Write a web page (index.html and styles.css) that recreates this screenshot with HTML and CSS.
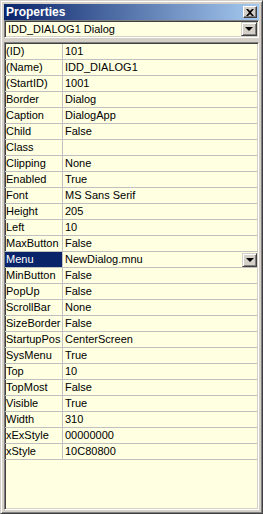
FILE: index.html
```html
<!DOCTYPE html>
<html lang="en">
<head>
  <meta charset="UTF-8">
  <title>Properties</title>
  <link rel="stylesheet" href="styles.css">
</head>
<body>
  <div class="window">
    <div class="titlebar">
      <span class="title">Properties</span>
      <span class="close-btn">
        <svg width="8" height="7" viewBox="0 0 8 7"><path d="M0 0h2l2 2 2-2h2L5 3.5 8 7H6L4 5 2 7H0l3-3.5z" fill="#000"/></svg>
      </span>
    </div>
    <div class="combo">
      <span class="combo-text">IDD_DIALOG1 Dialog</span>
      <span class="drop-btn"><span class="arrow"></span></span>
    </div>
    <div class="grid" id="grid">
      <!-- rows are built below -->
    </div>
  </div>

  <script>
    const props = [
      ["(ID)", "101"],
      ["(Name)", "IDD_DIALOG1"],
      ["(StartID)", "1001"],
      ["Border", "Dialog"],
      ["Caption", "DialogApp"],
      ["Child", "False"],
      ["Class", ""],
      ["Clipping", "None"],
      ["Enabled", "True"],
      ["Font", "MS Sans Serif"],
      ["Height", "205"],
      ["Left", "10"],
      ["MaxButton", "False"],
      ["Menu", "NewDialog.mnu"],
      ["MinButton", "False"],
      ["PopUp", "False"],
      ["ScrollBar", "None"],
      ["SizeBorder", "False"],
      ["StartupPos", "CenterScreen"],
      ["SysMenu", "True"],
      ["Top", "10"],
      ["TopMost", "False"],
      ["Visible", "True"],
      ["Width", "310"],
      ["xExStyle", "00000000"],
      ["xStyle", "10C80800"]
    ];
    const selected = "Menu";
    const grid = document.getElementById("grid");

    props.forEach(([name, value]) => {
      const row = document.createElement("div");
      row.className = "row";

      const nameCell = document.createElement("div");
      nameCell.className = "name";
      nameCell.textContent = name;

      const valueCell = document.createElement("div");
      valueCell.className = "value";
      const text = document.createElement("span");
      text.textContent = value;
      valueCell.appendChild(text);

      if (name === selected) {
        row.classList.add("selected");
        const btn = document.createElement("span");
        btn.className = "drop-btn small";
        btn.innerHTML = '<span class="arrow"></span>';
        valueCell.appendChild(btn);
      }

      row.appendChild(nameCell);
      row.appendChild(valueCell);
      grid.appendChild(row);
    });
  </script>
</body>
</html>
```

FILE: styles.css
```css
body {
  margin: 0;
  background: #d4d0c8;
  font-family: "Liberation Sans", Arial, sans-serif;
  font-size: 11px;
}
.window {
  width: 263px;
  height: 514px;
  box-sizing: border-box;
  background: #d4d0c8;
  border: 1px solid;
  border-color: #d4d0c8 #404040 #404040 #d4d0c8;
  box-shadow: inset 1px 1px #fff, inset -1px -1px #808080;
  padding: 3px 3px 3px 3px;
  display: flex;
  flex-direction: column;
}
.titlebar {
  height: 16px;
  background: linear-gradient(to right, #0a246a, #a6caf0);
  display: flex;
  align-items: center;
  justify-content: space-between;
  padding: 0 2px 0 2px;
}
.title {
  color: #fff;
  font-weight: bold;
  font-size: 12px;
  line-height: 16px;
}
.close-btn {
  width: 14px;
  height: 12px;
  box-sizing: border-box;
  background: #d4d0c8;
  border: 1px solid;
  border-color: #fff #404040 #404040 #fff;
  box-shadow: inset -1px -1px #808080;
  display: flex;
  align-items: center;
  justify-content: center;
  padding-right: 1px;
}
.combo {
  height: 18px;
  box-sizing: border-box;
  background: #ffffe1;
  border: 1px solid;
  border-color: #808080 #fff #fff #808080;
  box-shadow: inset 1px 1px #404040, inset -1px -1px #d4d0c8;
  display: flex;
  align-items: center;
  justify-content: space-between;
  padding: 2px 1px 2px 3px;
}
.combo-text {
  line-height: 14px;
}
.drop-btn {
  width: 16px;
  height: 14px;
  box-sizing: border-box;
  background: #d4d0c8;
  border: 1px solid;
  border-color: #d4d0c8 #404040 #404040 #d4d0c8;
  box-shadow: inset 1px 1px #fff, inset -1px -1px #808080;
  display: flex;
  align-items: center;
  justify-content: center;
}
.drop-btn.small {
  width: 15px;
  height: 14px;
  margin-top: 1px;
}
.arrow {
  width: 0;
  height: 0;
  border-left: 4px solid transparent;
  border-right: 4px solid transparent;
  border-top: 4px solid #000;
}
.grid {
  margin-top: 4px;
  flex: 1;
  box-sizing: border-box;
  background: #ffffe1;
  border: 1px solid;
  border-color: #808080 #fff #fff #808080;
  box-shadow: inset 1px 1px #404040, inset -1px -1px #d4d0c8;
  padding: 1px 1px 0 0;
}
.row {
  display: grid;
  grid-template-columns: 58px 1fr;
  height: 16px;
  box-sizing: border-box;
  border-bottom: 1px solid #c0c0c0;
}
.name {
  border-right: 1px solid #c0c0c0;
  padding-left: 1px;
  line-height: 15px;
  white-space: nowrap;
  overflow: hidden;
}
.value {
  padding-left: 2px;
  line-height: 15px;
  display: flex;
  justify-content: space-between;
}
.selected .name {
  background: #0a246a;
  color: #fff;
}
```
